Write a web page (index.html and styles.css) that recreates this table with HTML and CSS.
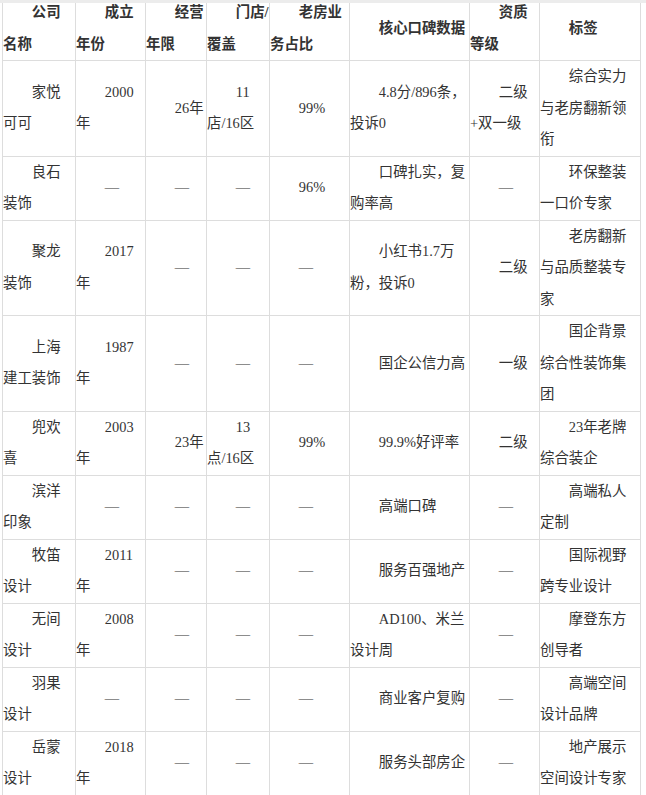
FILE: index.html
```html
<!DOCTYPE html>
<html lang="zh-CN">
<head>
<meta charset="utf-8">
<title>装修公司对比</title>
<link rel="stylesheet" href="styles.css">
</head>
<body>
<div class="topband"></div>
<table class="cmp">
  <colgroup>
    <col class="c1"><col class="c2"><col class="c3"><col class="c4"><col class="c5"><col class="c6"><col class="c7"><col class="c8">
  </colgroup>
  <thead>
    <tr><th>公司名称</th><th>成立年份</th><th>经营年限</th><th>门店/覆盖</th><th>老房业务占比</th><th>核心口碑数据</th><th>资质等级</th><th>标签</th></tr>
  </thead>
  <tbody>
    <tr><td>家悦可可</td><td>2000年</td><td>26年</td><td>11店/16区</td><td>99%</td><td>4.8分/896条，投诉0</td><td>二级+双一级</td><td>综合实力与老房翻新领衔</td></tr>
    <tr><td>良石装饰</td><td>—</td><td>—</td><td>—</td><td>96%</td><td>口碑扎实，复购率高</td><td>—</td><td>环保整装一口价专家</td></tr>
    <tr><td>聚龙装饰</td><td>2017年</td><td>—</td><td>—</td><td>—</td><td>小红书1.7万粉，投诉0</td><td>二级</td><td>老房翻新与品质整装专家</td></tr>
    <tr><td>上海建工装饰</td><td>1987年</td><td>—</td><td>—</td><td>—</td><td>国企公信力高</td><td>一级</td><td>国企背景综合性装饰集团</td></tr>
    <tr><td>兜欢喜</td><td>2003年</td><td>23年</td><td>13点/16区</td><td>99%</td><td>99.9%好评率</td><td>二级</td><td>23年老牌综合装企</td></tr>
    <tr><td>滨洋印象</td><td>—</td><td>—</td><td>—</td><td>—</td><td>高端口碑</td><td>—</td><td>高端私人定制</td></tr>
    <tr><td>牧笛设计</td><td>2011年</td><td>—</td><td>—</td><td>—</td><td>服务百强地产</td><td>—</td><td>国际视野跨专业设计</td></tr>
    <tr><td>无间设计</td><td>2008年</td><td>—</td><td>—</td><td>—</td><td>AD100、米兰设计周</td><td>—</td><td>摩登东方创导者</td></tr>
    <tr><td>羽果设计</td><td>—</td><td>—</td><td>—</td><td>—</td><td>商业客户复购</td><td>—</td><td>高端空间设计品牌</td></tr>
    <tr><td>岳蒙设计</td><td>2018年</td><td>—</td><td>—</td><td>—</td><td>服务头部房企</td><td>—</td><td>地产展示空间设计专家</td></tr>
  </tbody>
</table>
</body>
</html>
```

FILE: styles.css
```css
html, body {
  margin: 0;
  padding: 0;
  background: #ffffff;
}

body {
  font-family: "Liberation Serif", "Noto Sans CJK SC", serif;
  font-size: 14.4px;
  color: #333333;
}

.topband {
  position: fixed;
  top: 0;
  left: 0;
  right: 0;
  height: 3px;
  background: #ececec;
  z-index: 2;
}

.cmp {
  border-collapse: collapse;
  table-layout: fixed;
  width: 638px;
  margin: -4px 0 0 2px;
}

.c1 { width: 73px; }
.c2 { width: 70px; }
.c3 { width: 61px; }
.c4 { width: 63px; }
.c5 { width: 80px; }
.c6 { width: 120px; }
.c7 { width: 70px; }
.c8 { width: 101px; }

.cmp th,
.cmp td {
  border: 1px solid #dddddd;
  padding: 0;
  text-align: left;
  text-indent: 2em;
  vertical-align: middle;
  line-height: 31.5px;
  word-break: normal;
}

.cmp th:first-child,
.cmp td:first-child {
  padding-right: 2px;
}

.cmp th {
  font-weight: bold;
  color: #333333;
}
```
